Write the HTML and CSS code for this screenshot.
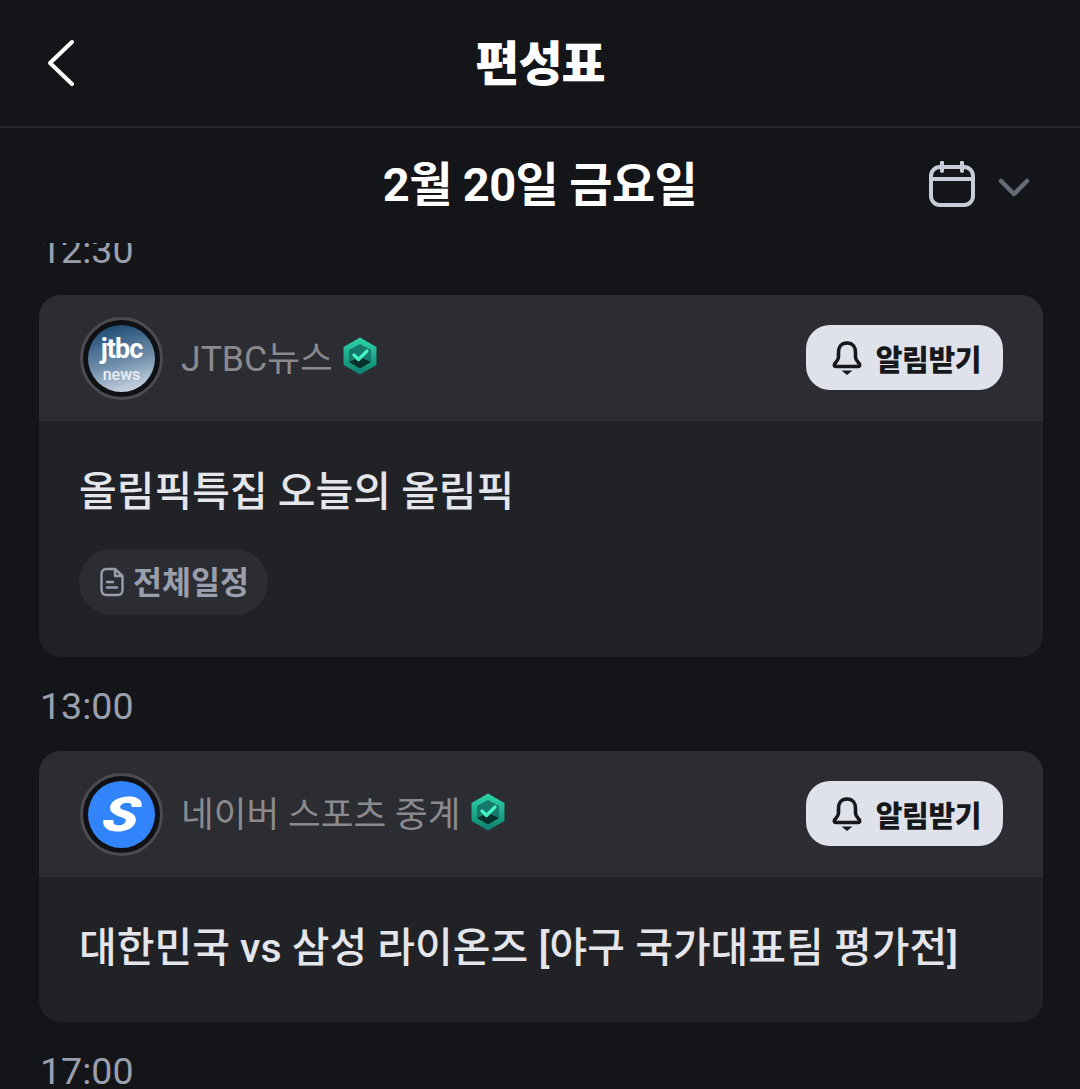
FILE: index.html
```html
<!DOCTYPE html>
<html lang="ko">
<head>
    <meta charset="UTF-8">
    <meta name="viewport" content="width=device-width, initial-scale=1.0">
    <title>편성표</title>
    <link rel="stylesheet" href="styles.css">
</head>
<body>
    <svg class="defs" width="0" height="0">
        <defs>
            <linearGradient id="badge-rim" x1="0" y1="0" x2="0" y2="1">
                <stop offset="0" stop-color="#2fd6a8"/>
                <stop offset="1" stop-color="#0c7f70"/>
            </linearGradient>
        </defs>
        <symbol id="badge" viewBox="0 0 36 38">
            <path d="M18 0.500 L34.500 10 V28 L18 37.500 L1.500 28 V10 Z" fill="url(#badge-rim)"/>
            <path d="M18 7 L29 13 V25 L18 20 L7 25 V13 Z" fill="#157a6c"/>
            <path d="M7 25 L18 20 L29 25 L18 31.500 Z" fill="#08302d"/>
            <path d="M12 18 L16.500 22.500 L25 14" fill="none" stroke="#44f5c0" stroke-width="3.200" stroke-linecap="round" stroke-linejoin="round"/>
        </symbol>
        <symbol id="bell" viewBox="0 0 30 36">
            <path d="M15 3 C9 3 6.500 7.500 6.500 12 V17 C6.500 20 4 22 2.500 24 C2 25.500 2.500 26.500 4 26.500 H26 C27.500 26.500 28 25.500 27.500 24 C26 22 23.500 20 23.500 17 V12 C23.500 7.500 21 3 15 3 Z" fill="none" stroke="#17181c" stroke-width="3.600" stroke-linejoin="round"/>
            <path d="M9.500 30.500 H20.500 L15 35 Z" fill="#17181c"/>
        </symbol>
    </svg>

    <header class="topbar">
        <svg class="back" width="30" height="48" viewBox="0 0 30 48">
            <path d="M26 3 L4 24 L26 45" fill="none" stroke="#fff" stroke-width="4" stroke-linecap="round" stroke-linejoin="round"/>
        </svg>
        <h1>편성표</h1>
    </header>

    <div class="date-row">
        <h2>2월 20일 금요일</h2>
        <div class="date-tools">
            <svg width="48" height="48" viewBox="0 0 48 48">
                <rect x="3" y="6" width="42" height="38" rx="9" fill="none" stroke="#c9ccd9" stroke-width="4"/>
                <path d="M3 18 H45 M14 1.500 V10 M34 1.500 V10" fill="none" stroke="#c9ccd9" stroke-width="4" stroke-linecap="round"/>
            </svg>
            <svg class="chevron" width="32" height="20" viewBox="0 0 32 20">
                <path d="M3 3 L16 16 L29 3" fill="none" stroke="#666b78" stroke-width="4.500" stroke-linecap="round" stroke-linejoin="round"/>
            </svg>
        </div>
    </div>

    <main class="schedule">
        <div class="list">
            <div class="time">12:30</div>
            <section class="card">
                <div class="card-head">
                    <div class="avatar">
                        <div class="logo logo-jtbc">
                            <span class="jtbc-mark">jtbc</span>
                            <span class="jtbc-sub">news</span>
                        </div>
                    </div>
                    <span class="channel">JTBC뉴스</span>
                    <svg class="badge"><use href="#badge"/></svg>
                    <button class="notify"><svg width="30" height="36"><use href="#bell"/></svg>알림받기</button>
                </div>
                <div class="card-body">
                    <p class="program">올림픽특집 오늘의 올림픽</p>
                    <a class="tag">
                        <svg width="24" height="30" viewBox="0 0 24 30">
                            <path d="M6 2 H15 L22.500 9 V23 C22.500 26 20.500 28 18 28 H6 C3.500 28 1.500 26 1.500 23 V7 C1.500 4 3.500 2 6 2 Z M15 2 V9 H22.500" fill="none" stroke="#9a9fae" stroke-width="2.400" stroke-linejoin="round"/>
                            <path d="M7 15 H13 M7 20.500 H17" fill="none" stroke="#9a9fae" stroke-width="2.400" stroke-linecap="round"/>
                        </svg>
                        <span>전체일정</span>
                    </a>
                </div>
            </section>

            <div class="time">13:00</div>
            <section class="card">
                <div class="card-head">
                    <div class="avatar">
                        <div class="logo logo-sports"><span>S</span></div>
                    </div>
                    <span class="channel">네이버 스포츠 중계</span>
                    <svg class="badge"><use href="#badge"/></svg>
                    <button class="notify"><svg width="30" height="36"><use href="#bell"/></svg>알림받기</button>
                </div>
                <div class="card-body">
                    <p class="program">대한민국 vs 삼성 라이온즈 [야구 국가대표팀 평가전]</p>
                </div>
            </section>

            <div class="time">17:00</div>
        </div>
    </main>
</body>
</html>
```

FILE: styles.css
```css
* {
    box-sizing: border-box;
}

html, body {
    height: 100%;
}

body {
    margin: 0;
    display: flex;
    flex-direction: column;
    overflow: hidden;
    background-color: #141518;
    font-family: Roboto, "Noto Sans CJK KR", sans-serif;
}

.defs {
    position: absolute;
}

.topbar {
    position: relative;
    flex: none;
    height: 128px;
    display: flex;
    align-items: center;
    justify-content: center;
    padding-bottom: 6px;
    border-bottom: 2px solid #26272b;
}

.back {
    position: absolute;
    left: 46px;
    top: 39px;
}

.topbar h1 {
    margin: 0;
    font-size: 48px;
    font-weight: 900;
    letter-spacing: -1px;
    color: #fff;
}

.date-row {
    position: relative;
    flex: none;
    height: 115px;
    display: flex;
    align-items: center;
    justify-content: center;
    padding-bottom: 11px;
}

.date-row h2 {
    margin: 0;
    font-size: 47px;
    font-weight: 700;
    letter-spacing: -0.6px;
    color: #fff;
}

.date-tools {
    position: absolute;
    right: 50px;
    top: 33px;
    display: flex;
    align-items: center;
    gap: 22px;
}

.chevron {
    margin-top: 5px;
}

.schedule {
    flex: 1;
    overflow: hidden;
}

.list {
    margin-top: -16px;
    padding: 0 37px 0 39px;
}

.time {
    height: 46px;
    display: flex;
    align-items: center;
    padding-left: 1px;
    font-size: 37.600px;
    color: #9a9fae;
}

.card {
    margin: 22px 0 26px;
    border-radius: 22px;
    overflow: hidden;
    background-color: #212225;
}

.card-head {
    height: 126px;
    display: flex;
    align-items: center;
    padding: 0 40px 0 41px;
    background-color: #2c2d32;
}

.avatar {
    flex: none;
    width: 83px;
    height: 83px;
    padding: 5px;
    border: 3px solid #4c4c50;
    border-radius: 50%;
    background-color: #101114;
}

.logo {
    width: 100%;
    height: 100%;
    border-radius: 50%;
    overflow: hidden;
    display: flex;
    flex-direction: column;
    align-items: center;
    justify-content: center;
    color: #fff;
}

.logo-jtbc {
    background: linear-gradient(165deg, #1f4d75 8%, #6f8eab 55%, #d3dbe8 95%);
}

.jtbc-mark {
    font-size: 27px;
    font-weight: 700;
    letter-spacing: -1px;
}

.jtbc-sub {
    font-size: 16px;
    font-weight: 500;
    color: #e8edf3;
}

.logo-sports {
    background-color: #3284fb;
}

.logo-sports span {
    font-size: 48px;
    font-weight: 900;
    font-style: italic;
    transform: skewX(-10deg) scaleX(1.25);
}

.channel {
    margin: 0 0 6px 18px;
    font-size: 35.6px;
    color: #8a8a8e;
}

.badge {
    flex: none;
    width: 36px;
    height: 38px;
    margin: 0 0 4px 9px;
}

.notify {
    margin: 0 0 1px auto;
    width: 197px;
    height: 65px;
    display: flex;
    align-items: center;
    justify-content: center;
    gap: 14px;
    padding: 0 0 0 4px;
    border: 0;
    border-radius: 24px;
    background-color: #e0e2eb;
    font-family: inherit;
    font-size: 29px;
    font-weight: 900;
    letter-spacing: -0.3px;
    color: #17181c;
}

.card-body {
    padding: 41px 40px 42px;
}

.program {
    margin: 0;
    padding-bottom: 2px;
    font-size: 41px;
    font-weight: 500;
    line-height: 60px;
    color: #e4e6ec;
}

.tag {
    margin-top: 25px;
    width: 189px;
    height: 66px;
    display: flex;
    align-items: center;
    gap: 9px;
    padding-left: 21px;
    border-radius: 33px;
    background-color: #2c2d32;
    font-size: 31.500px;
    font-weight: 700;
    color: #9a9fae;
}

.tag span {
    margin-bottom: 5px;
}
```
